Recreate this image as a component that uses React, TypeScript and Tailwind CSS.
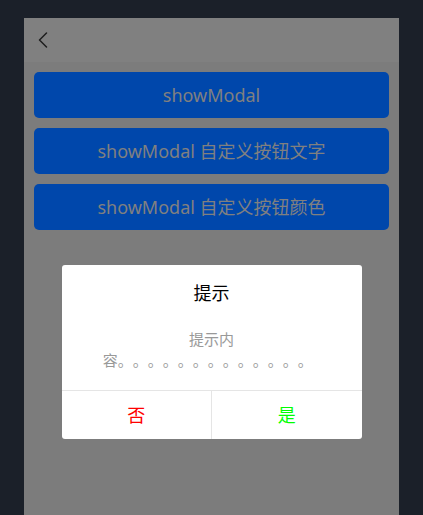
import { ChevronLeft } from 'lucide-react'

const font = { fontFamily: '"Noto Sans", "Noto Sans CJK SC", sans-serif' }

const buttons = ['showModal', 'showModal 自定义按钮文字', 'showModal 自定义按钮颜色']

function Modal() {
  return (
    <div className="w-[300px] overflow-hidden rounded-[3px] bg-white text-center">
      <div className="px-[24px] pt-[18px] pb-[5px]">
        <div className="text-[18px] leading-[21px] text-black">提示</div>
      </div>
      <div className="px-[24px] py-[19.5px] font-['Noto_Sans_CJK_SC',sans-serif] text-[15px] leading-[21px] text-[#999]">
        提示内
        <br />
        容<span className="tracking-[7.5px]">。。。。。。。。。。。。。</span>
      </div>
      <div className="flex border-t border-[#e5e5e5] text-[18px] leading-[48px]">
        <div className="flex-1 text-[#ff0000]">否</div>
        <div className="flex-1 border-l border-[#e5e5e5] text-[#00ff00]">是</div>
      </div>
    </div>
  )
}

export default function App() {
  return (
    <div className="h-[515px] overflow-hidden bg-[#1b2029] pt-[18px]" style={font}>
      <div className="relative mx-auto h-[667px] w-[375px] bg-[#7c7c7c]">
        <div className="flex h-[44px] items-center bg-[#808080] pl-[5px]">
          <ChevronLeft size={28} strokeWidth={1.3} className="text-[#1f1f1f]" />
        </div>
        <div className="flex flex-col gap-[10px] px-[10px] pt-[10px]">
          {buttons.map((b) => (
            <div
              key={b}
              className="h-[46px] rounded-[5px] bg-[#0047ab] text-center text-[18px] leading-[46px] text-[#808080]"
            >
              {b}
            </div>
          ))}
        </div>
        <div className="absolute inset-0 flex items-center justify-center">
          <Modal />
        </div>
      </div>
    </div>
  )
}
